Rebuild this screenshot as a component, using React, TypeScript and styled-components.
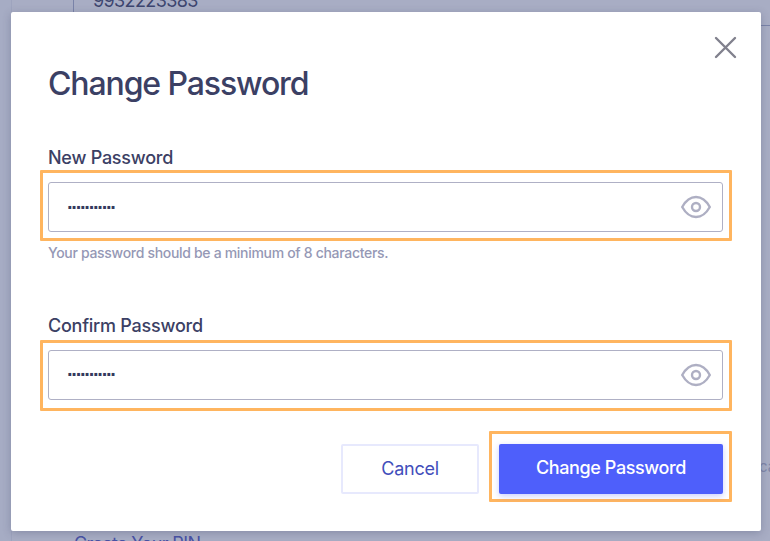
import React from "react";
import styled, { createGlobalStyle } from "styled-components";

const GlobalStyle = createGlobalStyle`
  *, *::before, *::after { box-sizing: border-box; }
  html, body { margin: 0; padding: 0; overflow: hidden; }
  body { font-family: Inter, "Liberation Sans", sans-serif; color: #3b4064; }
  button { font-family: inherit; cursor: pointer; }
`;

const Screen = styled.div`
  position: relative;
  width: 770px;
  height: 541px;
  overflow: hidden;
  background: #a6acc4;
`;

const Page = styled.div`
  height: 100%;
  margin-left: 11px;
  padding-left: 62px;
  border-left: 1px solid #9ea4be;
  background: #a8adc4;
  white-space: nowrap;
`;

const PhoneField = styled.div`
  display: flex;
  align-items: flex-start;
  height: 26px;
  margin-left: -1px;
  padding-left: 19px;
  border-left: 1px solid #7a83a8;
  border-bottom: 1px solid #7a83a8;
  font-size: 18px;
  line-height: 22px;
  letter-spacing: -0.62px;
  color: #3d456f;
  & > span { margin-top: -10px; }
`;

const PageNote = styled.div`
  margin-top: 431px;
  padding-left: 685px;
  font-size: 15px;
  line-height: 20px;
  color: #7f86a8;
`;

const PageLink = styled.div`
  margin-top: 55px;
  font-size: 18px;
  line-height: 24px;
  letter-spacing: -0.62px;
  color: #4952a4;
`;

const Dialog = styled.section`
  position: absolute;
  left: 11px;
  top: 12px;
  width: 750px;
  height: 519px;
  padding: 0 29px;
  border-radius: 2px;
  background: #fff;
  box-shadow: 0 2px 8px rgba(60, 65, 100, 0.3);
`;

const DialogHeader = styled.header`
  display: flex;
  justify-content: space-between;
  height: 133px;
  padding: 24px 0 0 8px;
`;

const Title = styled.h1`
  margin: 28px 0 0;
  font-size: 32px;
  line-height: 40px;
  font-weight: 500;
  letter-spacing: -1.12px;
  color: #3b4064;
`;

const CloseButton = styled.button`
  width: 24px;
  height: 24px;
  margin-right: -5px;
  padding: 0;
  border: 0;
  background: none;
  svg { display: block; }
`;

const Field = styled.div<{ $height: number; $gap: number }>`
  height: ${(p) => p.$height}px;
  label {
    display: block;
    height: ${(p) => p.$gap}px;
    padding-left: 8px;
    font-size: 18px;
    line-height: 25px;
    font-weight: 500;
    letter-spacing: -0.24px;
    color: #3b4064;
  }
`;

const Highlight = styled.div<{ $pad: string }>`
  border: 3px solid #ffb55f;
  border-radius: 1px;
  padding: ${(p) => p.$pad};
`;

const PasswordBox = styled.div`
  display: flex;
  align-items: center;
  justify-content: space-between;
  height: 50px;
  padding: 0 11px 0 18px;
  border: 1px solid #afb0c5;
  border-radius: 3px;
  svg { display: block; }
`;

const Mask = styled.span<{ $shift: number }>`
  font: bold 20px/20px "Liberation Sans", sans-serif;
  letter-spacing: -2.33px;
  margin-top: ${(p) => p.$shift}px;
  color: #34395e;
`;

const Hint = styled.p`
  margin: 2px 0 0 8px;
  font-size: 14px;
  line-height: 20px;
  font-weight: 500;
  letter-spacing: -0.31px;
  color: #9598b5;
`;

const Actions = styled.div`
  display: flex;
  justify-content: flex-end;
  align-items: flex-start;
  gap: 10px;
`;

const CancelButton = styled.button`
  width: 138px;
  height: 50px;
  margin-top: 13px;
  padding: 0 0 2px;
  border: 2px solid #e7e9fd;
  border-radius: 2px;
  background: #fff;
  color: #424ebb;
  font-size: 18px;
  letter-spacing: -0.25px;
`;

const SubmitButton = styled.button`
  display: block;
  width: 224px;
  height: 50px;
  padding: 0 0 3px;
  border: 0;
  border-radius: 2px;
  background: #4e5ffb;
  color: #fff;
  font-size: 18px;
  font-weight: 500;
  letter-spacing: -0.4px;
  box-shadow: 0 2px 6px rgba(78, 95, 251, 0.3);
`;

const EyeIcon = () => (
  <svg width="30" height="24" viewBox="0 0 30 24" fill="none" stroke="#aeafc3" strokeWidth="2.4">
    <path d="M1.2 12C5 5.2 9.6 2 15 2s10 3.2 13.8 10C25 18.8 20.4 22 15 22S5 18.8 1.2 12Z" strokeLinejoin="round" />
    <circle cx="15" cy="12" r="4" />
  </svg>
);

const CloseIcon = () => (
  <svg width="24" height="24" viewBox="0 0 24 24" stroke="#81818d" strokeWidth="2.4" strokeLinecap="round">
    <path d="M3 2 22 21M22 2 3 21" />
  </svg>
);

function PasswordField({ shift }: { shift: number }) {
  return (
    <PasswordBox>
      <Mask $shift={shift}>···········</Mask>
      <EyeIcon />
    </PasswordBox>
  );
}

export default function App() {
  return (
    <Screen>
      <GlobalStyle />
      <Page>
        <PhoneField><span>9932223383</span></PhoneField>
        <PageNote>can</PageNote>
        <PageLink>Create Your PIN</PageLink>
      </Page>
      <Dialog role="dialog" aria-label="Change Password">
        <DialogHeader>
          <Title>Change Password</Title>
          <CloseButton aria-label="Close"><CloseIcon /></CloseButton>
        </DialogHeader>
        <Field $height={168} $gap={25}>
          <label>New Password</label>
          <Highlight $pad="9px 6px 6px 5px"><PasswordField shift={0} /></Highlight>
          <Hint>Your password should be a minimum of 8 characters.</Hint>
        </Field>
        <Field $height={118} $gap={27}>
          <label>Confirm Password</label>
          <Highlight $pad="7px 6px 8px 5px"><PasswordField shift={-2} /></Highlight>
        </Field>
        <Actions>
          <CancelButton>Cancel</CancelButton>
          <Highlight $pad="10px 6px 5px 7px"><SubmitButton>Change Password</SubmitButton></Highlight>
        </Actions>
      </Dialog>
    </Screen>
  );
}
